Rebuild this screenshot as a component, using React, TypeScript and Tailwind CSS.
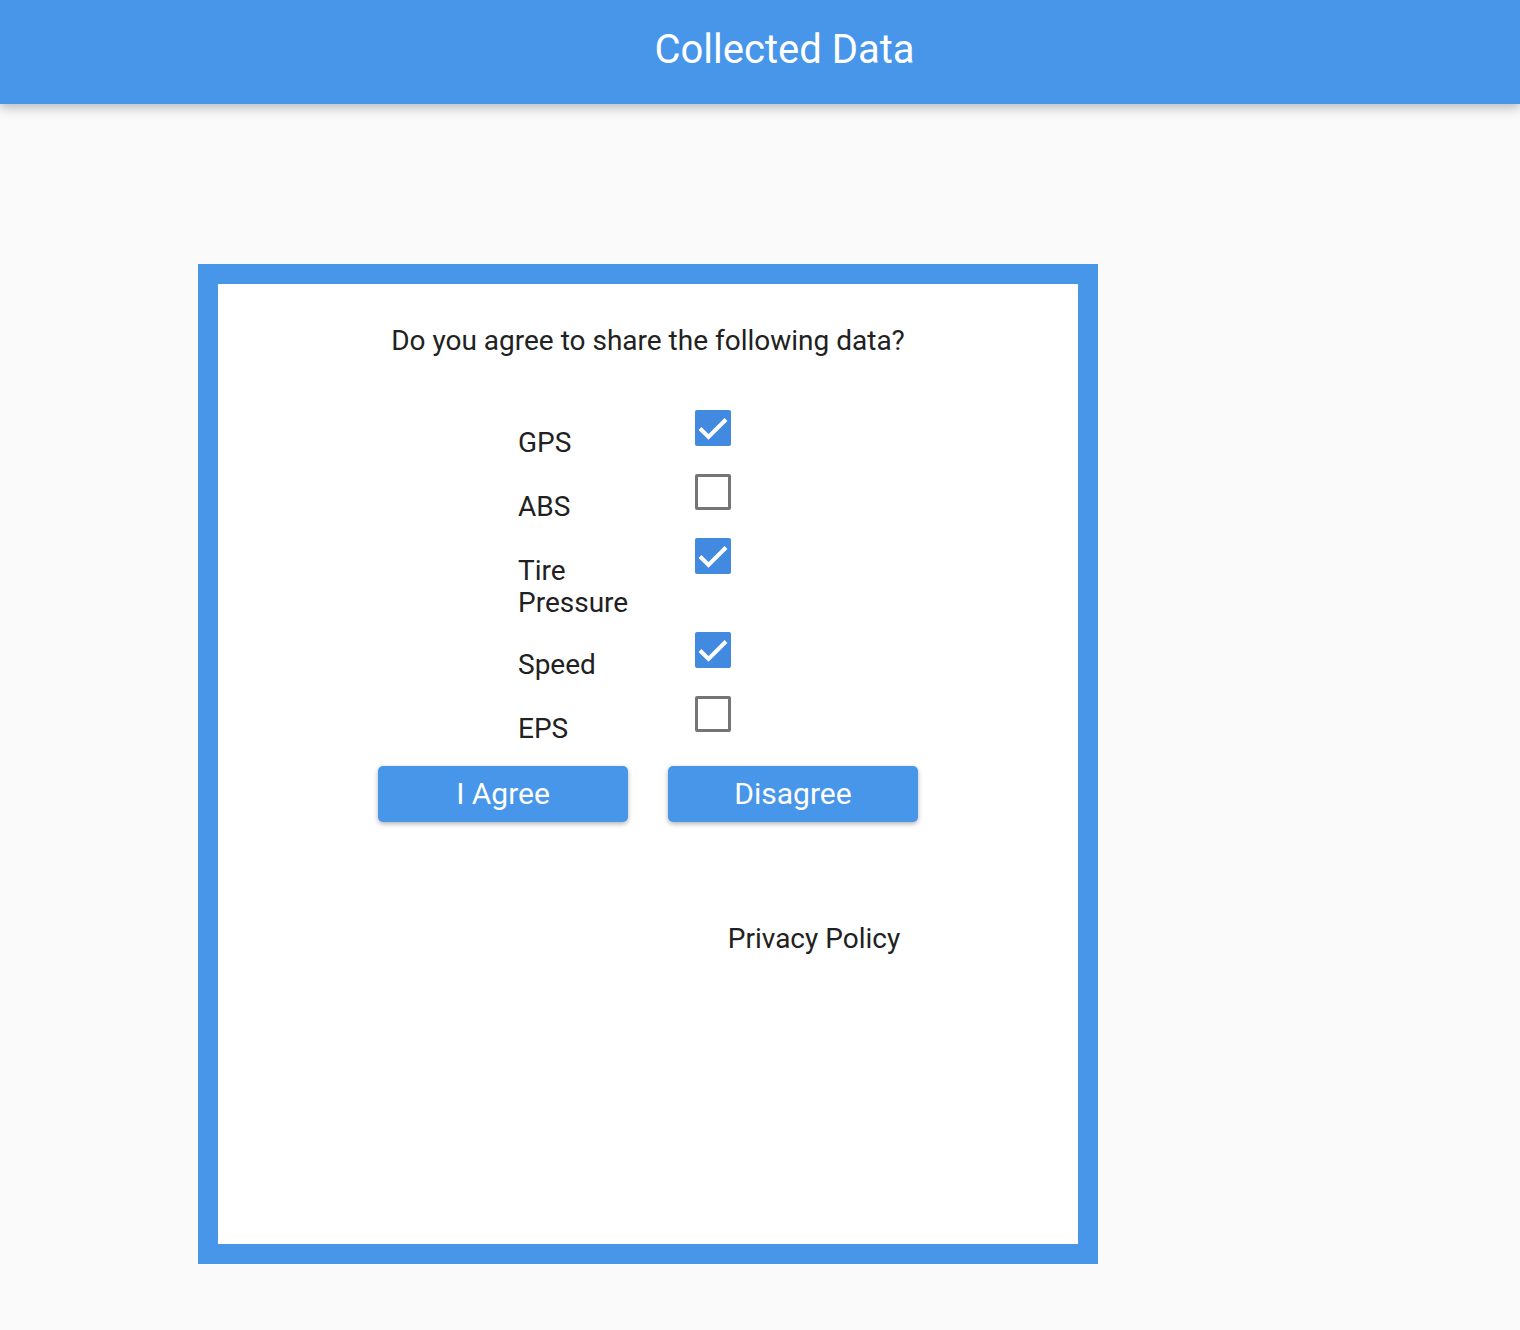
import React from 'react';

const items = [
  { label: 'GPS', checked: true },
  { label: 'ABS', checked: false },
  { label: 'Tire Pressure', checked: true },
  { label: 'Speed', checked: true },
  { label: 'EPS', checked: false },
];

const Check = ({ checked }: { checked: boolean }) =>
  checked ? (
    <div className="w-[36px] h-[36px] rounded-[2px] bg-[#4289e0]">
      <svg width="36" height="36" viewBox="0 0 36 36" fill="none">
        <path d="M5 18.5l8.5 8.5L31 9.5" stroke="white" strokeWidth="4" />
      </svg>
    </div>
  ) : (
    <div className="w-[36px] h-[36px] rounded-[2px] border-[3px] border-[#757575] bg-white" />
  );

const App = () => {
  return (
    <div
      className="min-h-[1330px] bg-[#fafafa] text-[#212121]"
      style={{ fontFamily: 'Roboto, "Liberation Sans", sans-serif' }}
    >
      <header className="h-[104px] pb-[5px] bg-[#4896ea] flex items-center justify-center shadow-[0_4px_10px_rgba(0,0,0,0.25)] relative z-10">
        <h1 className="text-[40px] text-white leading-none ml-[49px]">Collected Data</h1>
      </header>

      <div className="pt-[160px] pl-[198px]">
        <div className="w-[900px] h-[1000px] border-[20px] border-[#4896ea] bg-white flex flex-col items-center">
          <p className="mt-[41px] text-[28px] leading-[32px]">
            Do you agree to share the following data?
          </p>

          <div className="mt-[53px] ml-[-47px] flex flex-col">
            {items.map((it) => (
              <div key={it.label} className="flex min-h-[64px]">
                <div className="w-[177px] pt-[17px] pb-[13px]">
                  <span className="block w-[140px] text-[28px] leading-[32px]">{it.label}</span>
                </div>
                <Check checked={it.checked} />
              </div>
            ))}
          </div>

          <div className="mt-[6px] flex gap-[40px]">
            <button className="w-[250px] h-[56px] pb-[1px] rounded-[5px] bg-[#4896ea] text-white text-[30px] shadow-[0_2px_5px_rgba(0,0,0,0.3)]">
              I Agree
            </button>
            <button className="w-[250px] h-[56px] pb-[1px] rounded-[5px] bg-[#4896ea] text-white text-[30px] shadow-[0_2px_5px_rgba(0,0,0,0.3)]">
              Disagree
            </button>
          </div>

          <p className="mt-[101px] ml-[332px] text-[28px] leading-[32px]">Privacy Policy</p>
        </div>
      </div>
    </div>
  );
};

export default App;
